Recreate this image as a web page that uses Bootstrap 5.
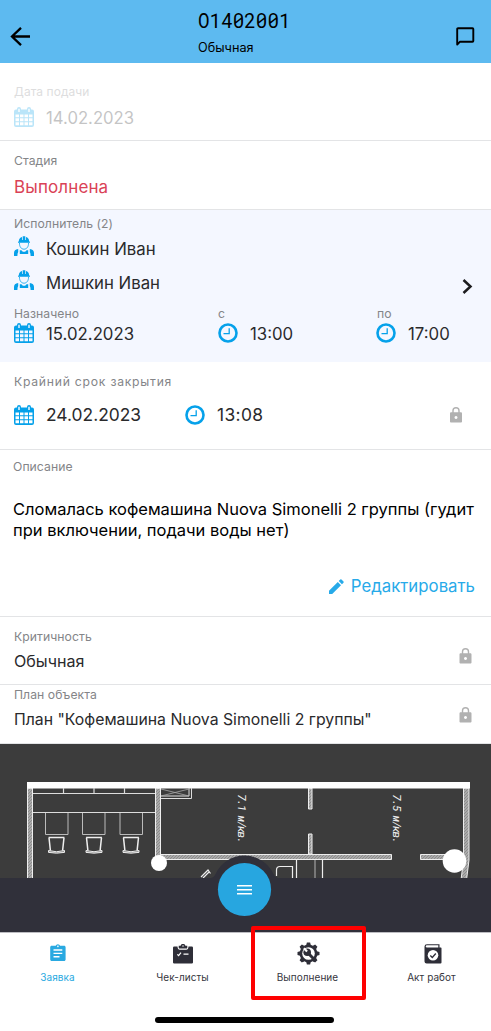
<!DOCTYPE html>
<html lang="ru">
<head>
<meta charset="utf-8">
<meta name="viewport" content="width=device-width, initial-scale=1">
<title>Заявка O1402001</title>
<link href="https://cdn.jsdelivr.net/npm/bootstrap@5.3.0/dist/css/bootstrap.min.css" rel="stylesheet">
<style>
  body { font-family: Inter, "Liberation Sans", sans-serif; background: #fff; color: #2a2a2c; overflow: hidden; }
  svg { display: block; flex: none; }
  .topbar { height: 63px; background: #5dbaf0; color: #000; padding: 0 16px 0 10px; }
  .topbar-title { width: 260px; margin-left: 168px; padding-top: 9px; }
  .order-no { font: 19.3px/24px "Roboto Mono", "DejaVu Sans Mono", monospace; }
  .order-kind { font-size: 12.7px; line-height: 16px; margin-top: 7px; }
  .block { border-bottom: 1px solid #e3e4e6; padding-left: 14px; padding-right: 14px; }
  .caption { font-size: 12.2px; line-height: 16px; letter-spacing: .06px; color: #848588; white-space: nowrap; }
  .value { font-size: 17px; line-height: 20px; white-space: nowrap; }
  .faded { opacity: .27; }
  .b-created { height: 78px; padding-top: 21px; }
  .b-created .caption { font-size: 12px; }
  .b-created .value { font-size: 16.7px; }
  .b-stage { height: 69px; padding-top: 12px; }
  .b-stage .value { color: #da4256; margin-top: 8px; letter-spacing: .12px; }
  .b-team { height: 152px; padding-top: 6px; background: #f4f7ff; border: 0; }
  .b-team .value { font-size: 16.8px; }
  .ico { color: #05a1ea; }
  .b-due { height: 88px; padding-top: 12px; }
  .b-due .caption { letter-spacing: .75px; }
  .b-due .value { font-size: 17.4px; }
  .b-text { height: 167px; padding-top: 9px; padding-left: 13px; }
  .descr { font-size: 16.5px; line-height: 21px; color: #000; margin-top: 24px; white-space: nowrap; }
  .edit { color: #27aae9; margin-top: 35px; }
  .b-crit { height: 68px; padding-top: 12px; padding-right: 19px; }
  .b-plan { height: 59px; padding-top: 2px; padding-right: 19px; }
  .b-crit .value { font-size: 16.1px; }
  .b-plan .value { font-size: 15.8px; }
  .lock { color: #b1b1b1; }
  .plan { height: 189px; background: #3c3c3c; }
  .plan text { font: italic 11.5px "Roboto Mono", monospace; fill: #eee; }
  .tabs { height: 99px; }
  .tab { font-size: 10px; line-height: 14px; letter-spacing: .05px; color: #36363e; white-space: nowrap; width: 125px; flex: none; }
  .tab svg { color: #2e2e38; }
  .tab.current, .tab.current svg { color: #29a9e1; }
  .outline-box { left: 251px; top: -7px; width: 115px; height: 74px; border: 4px solid #fe0000; border-radius: 2px; }
  .homebar { left: 155px; bottom: 9px; width: 179px; height: 6px; background: #000; }
</style>
</head>
<body>
<svg width="0" height="0" class="position-absolute" aria-hidden="true">
  <symbol id="cal" viewBox="0 0 20 20"><path fill="currentColor" fill-rule="evenodd" d="M2 2.600h1V2a2 2 0 0 1 4 0v.6h6V2a2 2 0 0 1 4 0v.6h1a2 2 0 0 1 2 2V18a2 2 0 0 1-2 2H2a2 2 0 0 1-2-2V4.600a2 2 0 0 1 2-2zM4.300 1.800v3.200h1.400V1.800zM14.300 1.800v3.200h1.400V1.800zM1.500 7.500v2.700h3.500V7.500zM6 7.500v2.700h3.500V7.500zM10.500 7.500v2.700H14V7.500zM15 7.500v2.700h3.500V7.500zM1.500 11.300v2.900h3.500v-2.900zM6 11.300v2.900h3.500v-2.900zM10.500 11.300v2.900H14v-2.900zM15 11.300v2.900h3.500v-2.900zM1.500 15.300v3h3.500v-3zM6 15.300v3h3.500v-3zM10.500 15.300v3H14v-3zM15 15.300v3h3.500v-3z"/></symbol>
  <symbol id="clock" viewBox="0 0 20 20"><circle cx="10" cy="10" r="8.500" fill="none" stroke="currentColor" stroke-width="2.600"/><path d="M11.200 5.200v5.500H5.500" fill="none" stroke="currentColor" stroke-width="1.300"/></symbol>
  <symbol id="worker" viewBox="0 0 20 20"><path fill="currentColor" d="M4.800 5.500C4.800 3 6.200 1.500 8 1v3h.7V.3h2.600V4h.7V1c1.800.5 3.200 2 3.200 4.500l.8.300v1H4v-1zM0 20v-3c0-2.200 1.300-3.500 4.200-3.900V16q-.8 1-.8 4zM20 20v-3c0-2.200-1.300-3.500-4.200-3.900V16q.8 1 .8 4zM5.800 14.300h1.700c.6 1 1.500 1.500 2.500 1.500s1.900-.5 2.500-1.500h1.700V18H5.800z"/><path d="M5.500 7c-.2 3.800 1.900 6.200 4.500 6.200S14.700 10.800 14.500 7" fill="none" stroke="currentColor" stroke-width=".8"/></symbol>
  <symbol id="lockico" viewBox="0 0 12 16"><path fill="currentColor" fill-rule="evenodd" d="M1.300 5.300h1V3.700a3.700 3.700 0 0 1 7.400 0v1.600h1c.8 0 1.300.5 1.300 1.200v7.900c0 .7-.5 1.200-1.300 1.200H1.300c-.8 0-1.300-.5-1.300-1.200V6.500c0-.7.500-1.200 1.300-1.200zM3.700 5.300h4.600V3.700a2.300 2.300 0 0 0-4.600 0zM6 8.900a1.500 1.500 0 1 0 .01 0z"/></symbol>
</svg>

<header class="topbar d-flex align-items-center">
  <svg width="20" height="19" style="margin-top:10px" viewBox="0 0 20 19" fill="none" stroke="#000" stroke-width="2.300"><path d="M20 9.500H2.500M11 .8 2 9.500l9 8.700"/></svg>
  <div class="topbar-title align-self-start">
    <div class="order-no">O1402001</div>
    <div class="order-kind">Обычная</div>
  </div>
  <svg class="ms-auto" style="margin-top:9px" width="19" height="19" viewBox="0 0 19 19" fill="none" stroke="#000" stroke-width="1.900"><path d="M1.200 17.500V2q0-.8.800-.8h14.500q.8 0 .8.800v12q0 .8-.8.800H3.800z" stroke-linejoin="round"/></svg>
</header>

<section class="block b-created">
  <div class="faded">
    <div class="caption">Дата подачи</div>
    <div class="d-flex align-items-center" style="margin-top:8px">
      <svg class="ico" style="margin-top:-2px" width="20" height="20"><use href="#cal"/></svg>
      <span class="value" style="margin-left:12px">14.02.2023</span>
    </div>
  </div>
</section>

<section class="block b-stage">
  <div class="caption">Стадия</div>
  <div class="value">Выполнена</div>
</section>

<section class="block b-team">
  <div class="caption">Исполнитель (2)</div>
  <div class="d-flex">
    <div class="flex-grow-1">
      <div class="d-flex align-items-center" style="margin-top:7px"><svg class="ico" style="margin-top:-6px" width="20" height="20"><use href="#worker"/></svg><span class="value" style="margin-left:12px">Кошкин Иван</span></div>
      <div class="d-flex align-items-center" style="margin-top:14px"><svg class="ico" style="margin-top:-6px" width="20" height="20"><use href="#worker"/></svg><span class="value" style="margin-left:12px">Мишкин Иван</span></div>
    </div>
    <svg class="align-self-end" style="margin:0 4px -1px 0" width="11" height="15" viewBox="0 0 11 15" fill="none" stroke="#1c1c1e" stroke-width="2.500"><path d="m1.500 1 7 6.500-7 6.500"/></svg>
  </div>
  <div class="d-flex" style="margin-top:13px">
    <div style="width:204px">
      <div class="caption">Назначено</div>
      <div class="d-flex align-items-center" style="margin-top:2px"><svg class="ico" style="margin-top:-2px" width="20" height="20"><use href="#cal"/></svg><span class="value" style="margin-left:12px">15.02.2023</span></div>
    </div>
    <div style="width:159px">
      <div class="caption">с</div>
      <div class="d-flex align-items-center" style="margin-top:2px"><svg class="ico" style="margin-top:-2px" width="20" height="20"><use href="#clock"/></svg><span class="value" style="margin-left:12px">13:00</span></div>
    </div>
    <div>
      <div class="caption">по</div>
      <div class="d-flex align-items-center" style="margin-top:2px"><svg class="ico" style="margin:-2px 0 0 -1px" width="20" height="20"><use href="#clock"/></svg><span class="value" style="margin-left:12px">17:00</span></div>
    </div>
  </div>
</section>

<section class="block b-due">
  <div class="caption">Крайний срок закрытия</div>
  <div class="d-flex align-items-center" style="margin-top:15px">
    <div class="d-flex align-items-center" style="width:171px"><svg class="ico" width="20" height="20"><use href="#cal"/></svg><span class="value" style="margin-left:12px">24.02.2023</span></div>
    <svg class="ico" width="20" height="20"><use href="#clock"/></svg><span class="value" style="margin-left:12px;letter-spacing:.35px">13:08</span>
    <svg class="lock ms-auto" style="margin-right:15px" width="12" height="16"><use href="#lockico"/></svg>
  </div>
</section>

<section class="block b-text">
  <div class="caption">Описание</div>
  <div class="descr">Сломалась кофемашина Nuova Simonelli 2 группы (гудит<br>при включении, подачи воды нет)</div>
  <div class="edit d-flex align-items-center justify-content-end">
    <svg width="15" height="15" viewBox="0 0 15 15" fill="currentColor"><path d="M0 11.800 8.800 3 12 6.200 3.200 15H0zM9.700 2.100 11.300.5q.6-.5 1.200 0l2 2q.5.600 0 1.200l-1.600 1.600z"/></svg>
    <span class="value" style="margin:0 2px 0 7px;font-size:16.8px">Редактировать</span>
  </div>
</section>

<section class="block b-crit d-flex justify-content-between">
  <div>
    <div class="caption">Критичность</div>
    <div class="value" style="margin-top:6px">Обычная</div>
  </div>
  <svg class="lock" style="margin-top:19px" width="13" height="16"><use href="#lockico"/></svg>
</section>

<section class="block b-plan d-flex justify-content-between">
  <div>
    <div class="caption">План объекта</div>
    <div class="value" style="margin-top:7px">План "Кофемашина Nuova Simonelli 2 группы"</div>
  </div>
  <svg class="lock" style="margin-top:20px" width="13" height="16"><use href="#lockico"/></svg>
</section>

<section class="plan">
  <svg width="491" height="189" viewBox="0 744 491 189" fill="none">
    <defs>
      <pattern id="hatch" width="3" height="3" patternUnits="userSpaceOnUse"><path d="M0 0h3v3H0z" fill="#aaa"/><path d="m0 3 3-3" stroke="#858585" stroke-width=".8"/></pattern>
      <g id="chair" stroke="#eee"><path stroke-width="1.500" d="M.6.600h15.800M1 .6l1.400 13M16 .6l-1.400 13"/><path fill="#888" d="M.5 13.500q8 2.500 16 0v1.900q-8 1.500-16 0z"/></g>
    </defs>
    <g fill="url(#hatch)" stroke="#eee" stroke-width="1">
      <path d="M27.500 788h5v95h-5zM155.500 788h5v72h-5zM160 854.500h231.500v5H160zM420.500 854.500h36v5h-36zM308.500 788h3.500v21h-3.500zM308.500 834h3.500v20h-3.500zM463.500 788h5.500v72l-2.500 20h-5.500l2.500-20z"/>
    </g>
    <path d="M27 782h443v6.500H27z" fill="#fff"/>
    <path d="M33 793.500h122M33 812.500h122M63.500 788v5M94 788v5M124.500 788v5" stroke="#ddd" stroke-width="1.200"/>
    <path d="M45.500 813v21.500H68V813M82.500 813v21.500H105V813M120 813v21.500h22.500V813" stroke="#bbb"/>
    <path d="M161 796h28v-8M161 798.500h30.500V788" stroke="#ddd"/><path d="m161 789 28 7m-28 0 28-7" stroke="#aaa" stroke-width=".8"/>
    <use href="#chair" x="48" y="837"/><use href="#chair" x="85.500" y="837"/><use href="#chair" x="122.500" y="837"/>
    <path d="m201 877 7-7 2.500 3.500M203 878l6-6M276.500 876v-6q0-3.500 3.500-3.500h12.500V878M296.500 860v18M322.500 860v18" stroke="#eee" stroke-width="1.200"/><path d="M315 860v18" stroke="#888" stroke-width="1.600"/>
    <text transform="translate(238 794) rotate(90)" textLength="49.500">7.1 м/кв.</text>
    <text transform="translate(393 794) rotate(90)" textLength="49.500">7.5 м/кв.</text>
    <circle cx="159" cy="863" r="8" fill="#fff"/><circle cx="454.500" cy="861" r="11.800" fill="#fff"/>
    <path d="M0 878h210.500q3 0 5-4a32 32 0 0 1 58 0q2 4 5 4H491v54H0z" fill="#30303a"/>
    <path d="M0 932.500h491" stroke="#bdbdc2"/>
    <circle cx="244.500" cy="889.500" r="26.600" fill="#27a6e0"/>
    <path d="M237 885.800h15M237 889.800h15M237 893.800h15" stroke="#fff" stroke-width="1.500"/>
  </svg>
</section>

<nav class="tabs position-relative d-flex">
  <div class="tab current d-flex flex-column align-items-center" style="margin-left:-5px;padding-top:11px">
    <svg width="16" height="17" style="margin:0 0 9px 1px" viewBox="0 0 16 17"><path fill="currentColor" fill-rule="evenodd" d="M1.700 1.800h4a2.300 2.300 0 0 1 4.400 0h4c.9 0 1.500.6 1.500 1.500V15.500c0 .9-.6 1.500-1.500 1.500H1.700C.8 17 .2 16.400.2 15.500V3.300c0-.9.6-1.500 1.500-1.500zM7.900 1.500a.8.8 0 1 0 .01 0zM3.500 5.300v1.400h8.800V5.300zM3.500 8.700v1.400h8.800V8.700zM3.500 12.100v1.400h6v-1.400z"/></svg>
    <span>Заявка</span>
  </div>
  <div class="tab d-flex flex-column align-items-center" style="padding-top:11px">
    <svg width="20" height="20" style="margin:0 0 6px 1px" viewBox="0 0 20 20"><path fill="currentColor" d="M1.200 2.500h3.300q.2 3.300 2.300 3.300h6.400q2.100 0 2.300-3.300h3.300Q20 2.500 20 3.700V18.500q0 1-1.200 1H1.200Q0 19.500 0 18.500V3.700q0-1.200 1.200-1.200z"/><path fill="currentColor" fill-rule="evenodd" d="M5.700 1.700h1.900a2.500 2.500 0 0 1 4.800 0h1.900v1.700q0 1.200-1.200 1.200H6.900q-1.200 0-1.200-1.200zM10 1.200a.7.700 0 1 0 .01 0z"/><path d="m4.300 10.300 1.300 1.400 2.400-3M10.500 10.200h5" fill="none" stroke="#fff" stroke-width="1.200"/></svg>
    <span>Чек-листы</span>
  </div>
  <div class="tab d-flex flex-column align-items-center" style="padding-top:9px">
    <svg width="23" height="23" style="margin:0 0 5px 1px" viewBox="-11.500 -11.500 23 23"><g fill="currentColor"><circle r="8.900"/><g id="teeth"><path id="tooth" d="M-2.300-8.500-1.600-11h3.200l.7 2.500v17L1.600 11h-3.200l-.7-2.500z"/><use href="#tooth" transform="rotate(45)"/></g><use href="#teeth" transform="rotate(90)"/></g><circle r="6.300" fill="#fff"/><path d="m-.5-.5 5.800 6" stroke="currentColor" stroke-width="3"/><circle cx="-1.300" cy="-1.300" r="3.800" fill="currentColor"/><path d="m-5.500-4.500 3.300 3.300 1.500-1.500-3-3.200z" fill="#fff"/></svg>
    <span>Выполнение</span>
  </div>
  <div class="tab d-flex flex-column align-items-center" style="padding-top:11px;margin-left:-1px">
    <svg width="18" height="20" style="margin:0 0 6px 2px" viewBox="0 0 18 20"><path fill="currentColor" fill-rule="evenodd" d="M3 .2h12.500v3.300h1.300q.7 0 .7.700v14.300q0 1-1 1H2.700q-2.200 0-2.200-2V2.500Q.500.200 3 .2zM3 1.300q-1.300 0-1.300 1.100T3 3.500h11.300V1.300z"/><circle cx="9" cy="11.300" r="5.300" fill="#fff"/><path d="m6.300 11.500 2 2 3.500-4" fill="none" stroke="currentColor" stroke-width="1.300"/></svg>
    <span>Акт работ</span>
  </div>
  <div class="outline-box position-absolute"></div>
  <div class="homebar position-absolute rounded-pill"></div>
</nav>
<script src="https://cdn.jsdelivr.net/npm/bootstrap@5.3.0/dist/js/bootstrap.bundle.min.js"></script>
</body>
</html>
